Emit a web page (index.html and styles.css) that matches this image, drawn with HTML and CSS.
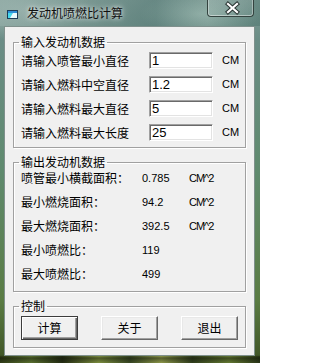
FILE: index.html
```html
<!DOCTYPE html>
<html lang="zh">
<head>
<meta charset="utf-8">
<title>发动机喷燃比计算</title>
<link rel="stylesheet" href="styles.css">
</head>
<body>
<div class="window">
  <div class="titlebar">
    <svg class="app-icon" width="11" height="9" viewBox="0 0 11 9">
      <rect x="0.5" y="0.5" width="10" height="8" fill="#eafcff" stroke="#1d3c58"/>
      <rect x="1" y="1" width="9" height="2" fill="#2f8fd8"/>
      <path d="M1 3 L6 3 L3 8 L1 8 Z" fill="#46d8ee"/>
    </svg>
    <span class="title">发动机喷燃比计算</span>
    <div class="close">
      <svg width="45" height="15" viewBox="0 0 45 15">
        <path d="M20 4 L29 12 M29 4 L20 12" stroke="#2a3634" stroke-width="4.2" stroke-linecap="square" fill="none"/>
        <path d="M20 4 L29 12 M29 4 L20 12" stroke="#ffffff" stroke-width="2.2" stroke-linecap="square" fill="none"/>
      </svg>
    </div>
  </div>
  <div class="client">
    <fieldset class="group group-in">
      <legend>输入发动机数据</legend>
      <div class="in-row"><span class="lbl">请输入喷管最小直径</span><input class="field" type="text" value="1"><span class="unit">CM</span></div>
      <div class="in-row"><span class="lbl">请输入燃料中空直径</span><input class="field" type="text" value="1.2"><span class="unit">CM</span></div>
      <div class="in-row"><span class="lbl">请输入燃料最大直径</span><input class="field" type="text" value="5"><span class="unit">CM</span></div>
      <div class="in-row"><span class="lbl">请输入燃料最大长度</span><input class="field" type="text" value="25"><span class="unit">CM</span></div>
    </fieldset>
    <fieldset class="group group-out">
      <legend>输出发动机数据</legend>
      <div class="out-row"><span class="olbl">喷管最小横截面积：</span><span class="val">0.785</span><span class="ounit">CM^2</span></div>
      <div class="out-row"><span class="olbl">最小燃烧面积：</span><span class="val">94.2</span><span class="ounit">CM^2</span></div>
      <div class="out-row"><span class="olbl">最大燃烧面积：</span><span class="val">392.5</span><span class="ounit">CM^2</span></div>
      <div class="out-row"><span class="olbl">最小喷燃比：</span><span class="val">119</span></div>
      <div class="out-row"><span class="olbl">最大喷燃比：</span><span class="val">499</span></div>
    </fieldset>
    <fieldset class="group group-ctl">
      <legend>控制</legend>
      <div class="btn-row">
        <button class="btn btn-default" type="button">计算</button>
        <button class="btn" type="button">关于</button>
        <button class="btn" type="button">退出</button>
      </div>
    </fieldset>
  </div>
</div>
</body>
</html>
```
FILE: styles.css
```css
html, body {
  margin: 0;
  padding: 0;
}
body {
  width: 260px;
  height: 363px;
  overflow: hidden;
  font-family: "Noto Sans CJK SC", "Liberation Sans", sans-serif;
  font-size: 12px;
  color: #000;
}
.window {
  width: 260px;
  height: 363px;
  display: flex;
  flex-direction: column;
  background:
    radial-gradient(ellipse 60px 22px at 200px 14px, rgba(190, 215, 205, 0.55), rgba(190, 215, 205, 0) 100%),
    radial-gradient(ellipse 70px 30px at 20px 10px, rgba(180, 200, 195, 0.6), rgba(180, 200, 195, 0) 100%),
    linear-gradient(180deg, rgba(0, 0, 0, 0) 0px, rgba(0, 0, 0, 0) 355px, rgba(10, 14, 6, 0.55) 358px, rgba(10, 14, 6, 0.2) 363px),
    linear-gradient(90deg, #3b4a1c 0%, #6f8a3a 12%, #2a3416 24%, #9bb04e 38%, #44562a 50%, #b0bc5c 62%, #3a4a22 74%, #7c963e 88%, #31401c 100%) 0 356px / 260px 7px no-repeat,
    linear-gradient(180deg, #7e9b95 0px, #6b8d86 40px, #5f8a6e 170px, #5a7c44 300px, #3e5224 363px);
  box-sizing: border-box;
  padding-bottom: 7px;
}
.titlebar {
  height: 26px;
  flex: 0 0 26px;
  display: flex;
  align-items: center;
  padding-left: 7px;
  background: linear-gradient(90deg, rgba(150, 175, 170, 0.55) 0%, rgba(120, 150, 145, 0.35) 30%, rgba(60, 100, 98, 0.35) 60%, rgba(110, 145, 138, 0.25) 80%, rgba(50, 95, 88, 0.3) 100%);
}
.app-icon {
  flex: 0 0 11px;
  margin-top: 2px;
}
.title {
  margin-left: 9px;
  line-height: 14px;
  color: #101010;
  text-shadow: 0 0 4px rgba(255, 255, 255, 0.85), 0 0 8px rgba(255, 255, 255, 0.5);
}
.close {
  align-self: flex-start;
  margin-left: auto;
  margin-right: 6px;
  width: 47px;
  height: 17px;
  box-sizing: border-box;
  border: 1px solid #34433f;
  border-top: none;
  border-radius: 0 0 4px 4px;
  box-shadow: inset 0 -1px 0 rgba(255, 255, 255, 0.45), inset 1px 0 0 rgba(255, 255, 255, 0.35), inset -1px 0 0 rgba(255, 255, 255, 0.35);
  background: linear-gradient(180deg, rgba(255, 255, 255, 0.12), rgba(255, 255, 255, 0.04));
}
.close svg {
  display: block;
}
.client {
  margin: 0 5px 0 4px;
  height: 330px;
  flex: 0 0 330px;
  box-sizing: border-box;
  border: 1px solid #7f908c;
  background: #f0f0f0;
  padding: 9px 8px 0 8px;
  display: flex;
  flex-direction: column;
}
.group {
  margin: 0;
  min-width: 0;
  border: 1px solid #a0a0a0;
  box-shadow: inset 1px 1px 0 #ffffff, 1px 1px 0 #ffffff;
}
.group + .group {
  margin-top: 8px;
}
.group legend {
  margin-left: -2px;
  padding: 0 2px;
  font-size: 12px;
  line-height: 12px;
}
.group-in {
  padding: 4px 7px 6px 7px;
  display: flex;
  flex-direction: column;
  gap: 7px;
}
.in-row {
  height: 17px;
  display: flex;
  align-items: center;
  white-space: nowrap;
}
.lbl {
  flex: 0 0 128px;
  line-height: 14px;
}
.field {
  flex: 0 0 64px;
  width: 64px;
  height: 17px;
  box-sizing: border-box;
  margin: 0;
  padding: 0 2px;
  border: 1px solid;
  border-color: #a0a0a0 #ffffff #ffffff #a0a0a0;
  box-shadow: inset 1px 1px 0 #6a6a6a, inset -1px -1px 0 #e3e3e3;
  background: #ffffff;
  font-family: "Liberation Sans", sans-serif;
  font-size: 13px;
  line-height: 13px;
  color: #000;
  outline: none;
}
.unit {
  margin-left: 9px;
  font-family: "Liberation Sans", sans-serif;
  font-size: 11px;
  line-height: 12px;
  margin-top: -2px;
}
.group-out {
  padding: 2px 7px 9px 7px;
  display: flex;
  flex-direction: column;
  gap: 8px;
}
.out-row {
  height: 16px;
  display: flex;
  align-items: center;
  white-space: nowrap;
}
.olbl {
  flex: 0 0 121px;
  line-height: 14px;
}
.val {
  flex: 0 0 47px;
  font-family: "Liberation Sans", sans-serif;
  font-size: 11px;
  line-height: 12px;
}
.ounit {
  flex: 0 0 auto;
  font-family: "Liberation Sans", sans-serif;
  font-size: 11px;
  line-height: 12px;
  letter-spacing: -1px;
}
.group-ctl {
  padding: 4px 6px 7px 7px;
}
.btn-row {
  display: flex;
  gap: 23px;
}
.btn {
  width: 57px;
  height: 24px;
  box-sizing: border-box;
  margin: 0;
  padding: 0;
  border: 1px solid;
  border-color: #ffffff #696969 #696969 #ffffff;
  box-shadow: inset -1px -1px 0 #a0a0a0, inset 1px 1px 0 #e8e8e8;
  background: #f0f0f0;
  font-family: "Noto Sans CJK SC", sans-serif;
  font-size: 12px;
  line-height: 14px;
  color: #000;
}
.btn-default {
  border: 1px solid #3c3c3c;
  box-shadow: inset 1px 1px 0 #ffffff, inset -1px -1px 0 #696969, inset -2px -2px 0 #a0a0a0;
}
```
